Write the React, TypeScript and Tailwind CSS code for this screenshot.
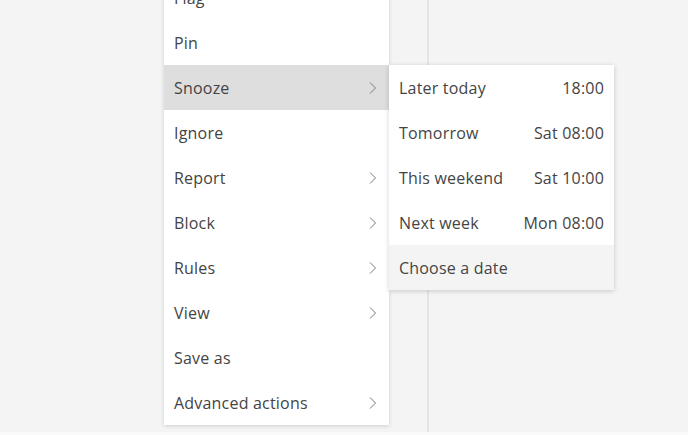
import { Fragment } from 'react'

type MenuItem = { label: string; sub?: boolean; active?: boolean }

const mainItems: MenuItem[] = [
  { label: 'Flag' },
  { label: 'Pin' },
  { label: 'Snooze', sub: true, active: true },
  { label: 'Ignore' },
  { label: 'Report', sub: true },
  { label: 'Block', sub: true },
  { label: 'Rules', sub: true },
  { label: 'View', sub: true },
  { label: 'Save as' },
  { label: 'Advanced actions', sub: true },
]

const snoozeItems = [
  { label: 'Later today', time: '18:00' },
  { label: 'Tomorrow', time: 'Sat 08:00' },
  { label: 'This weekend', time: 'Sat 10:00' },
  { label: 'Next week', time: 'Mon 08:00' },
]

function Chevron() {
  return (
    <svg width="8" height="14" viewBox="0 0 8 14" fill="none" className="text-[#7a7a7a]">
      <path d="M1 1.5l5.5 5.5-5.5 5.5" stroke="currentColor" strokeWidth="1" />
    </svg>
  )
}

export default function App() {
  return (
    <div
      className="relative w-[688px] h-[435px] overflow-hidden bg-[#f4f4f4] text-[#444444] tracking-[0.2px]"
      style={{ fontFamily: '"Segoe UI", "Open Sans", sans-serif' }}
    >
      {/* reading pane divider */}
      <div className="absolute left-[427px] top-0 h-[432px] w-[2px] bg-[#e4e4e4]" />
      <div className="absolute left-0 bottom-0 w-full h-[3px] bg-[#fafafa]" />

      {/* context menu */}
      <div className="absolute left-[164px] top-[-25px] w-[225px] bg-white shadow-[0_1px_4px_rgba(0,0,0,0.16)]">
        {mainItems.map(item => (
          <div
            key={item.label}
            className={`h-[45px] flex items-center justify-between pl-[10px] pr-[12px] text-[16px] ${item.active ? 'bg-[#dedede]' : ''}`}
          >
            <span>{item.label}</span>
            {item.sub && <Chevron />}
          </div>
        ))}
      </div>

      {/* snooze submenu */}
      <div className="absolute left-[389px] top-[65px] w-[225px] bg-white shadow-[0_1px_5px_rgba(0,0,0,0.18)]">
        {snoozeItems.map(s => (
          <Fragment key={s.label}>
            <div className="h-[45px] flex items-center justify-between pl-[10px] pr-[10px] text-[16px]">
              <span>{s.label}</span>
              <span>{s.time}</span>
            </div>
          </Fragment>
        ))}
        <div className="h-[45px] flex items-center pl-[10px] text-[16px] bg-[#f4f4f4]">Choose a date</div>
      </div>
    </div>
  )
}
